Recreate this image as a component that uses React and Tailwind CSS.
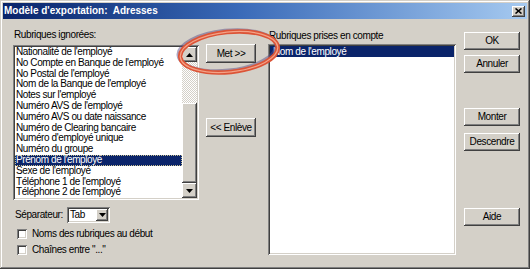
import React from "react";

const raised =
  "bg-[#d4d0c8] shadow-[inset_-1px_-1px_#404040,inset_1px_1px_#ffffff,inset_-2px_-2px_#808080,inset_2px_2px_#d4d0c8]";
const sunken =
  "shadow-[inset_1px_1px_#808080,inset_-1px_-1px_#ffffff,inset_2px_2px_#404040,inset_-2px_-2px_#d4d0c8]";

function Btn({ children, className = "" }) {
  return (
    <div
      className={`${raised} flex items-center justify-center text-[10px] tracking-[-0.4px] leading-none text-black ${className}`}
    >
      {children}
    </div>
  );
}

function DownArrow() {
  return (
    <svg width="7" height="4" viewBox="0 0 7 4">
      <path d="M0 0h7L3.5 4z" fill="#000" />
    </svg>
  );
}
function UpArrow() {
  return (
    <svg width="7" height="4" viewBox="0 0 7 4">
      <path d="M0 4h7L3.5 0z" fill="#000" />
    </svg>
  );
}

const items = [
  "Nationalité de l'employé",
  "No Compte en Banque de l'employé",
  "No Postal de l'employé",
  "Nom de la Banque de l'employé",
  "Notes sur l'employé",
  "Numéro AVS de l'employé",
  "Numéro AVS ou date naissance",
  "Numéro de Clearing bancaire",
  "Numéro d'employé unique",
  "Numéro du groupe",
  "Prénom de l'employé",
  "Sexe de l'employé",
  "Téléphone 1 de l'employé",
  "Téléphone 2 de l'employé",
];

export default function App() {
  return (
    <div
      className="relative w-[530px] h-[269px] bg-[#d4d0c8] p-[3px] flex flex-col overflow-hidden shadow-[inset_-1px_-1px_#404040,inset_1px_1px_#d4d0c8,inset_-2px_-2px_#808080,inset_2px_2px_#ffffff]"
      style={{ fontFamily: "'Liberation Sans', Arial, sans-serif" }}
    >
      {/* Title bar */}
      <div className="h-[16px] shrink-0 flex items-center justify-between bg-gradient-to-r from-[#0a246a] via-[#3a6ab8] via-45% to-[#a6caf0] pl-[1px] pr-[2px]">
        <span className="text-white font-bold text-[10px] leading-none">
          Modèle d'exportation:&nbsp; Adresses
        </span>
        <div className={`${raised} w-[13px] h-[11px] flex items-center justify-center`}>
          <svg width="7" height="6" viewBox="0 0 7 6">
            <path d="M0.5 0.5L6.5 5.5M6.5 0.5L0.5 5.5" stroke="#000" strokeWidth="1.6" />
          </svg>
        </div>
      </div>

      {/* Client area */}
      <div className="flex-1 flex pl-[10px] text-black text-[10px] tracking-[-0.4px]">
        {/* Left column */}
        <div className="w-[186px] flex flex-col pt-[10px]">
          <div className="h-[11px] leading-[11px] pl-[1px]">Rubriques ignorées:</div>
          <div className={`mt-[5px] h-[155px] bg-white ${sunken} p-[2px] flex`}>
            <div className="flex-1 overflow-hidden">
              {items.map((t) => {
                const sel = t === "Prénom de l'employé";
                return (
                  <div
                    key={t}
                    className={`h-[10.8px] leading-[10.8px] pl-[1px] whitespace-nowrap ${
                      sel
                        ? "bg-[#0a246a] text-white outline-1 outline-dotted outline-[#c8c090] -outline-offset-1"
                        : ""
                    }`}
                  >
                    {t}
                  </div>
                );
              })}
            </div>
            <div className="w-[15px] flex flex-col">
              <div className={`${raised} h-[15px] flex items-center justify-center`}>
                <UpArrow />
              </div>
              <div className="flex-1 bg-[repeating-conic-gradient(#ffffff_0%_25%,#d4d0c8_0%_50%)] bg-size-[2px_2px]" />
              <div className={`${raised} h-[80px]`} />
              <div className={`${raised} h-[15px] flex items-center justify-center`}>
                <DownArrow />
              </div>
            </div>
          </div>
          <div className="mt-[7px] flex items-center pl-[2px]">
            <div className="w-[52px] leading-none">Séparateur:</div>
            <div className={`w-[43px] h-[16px] bg-white ${sunken} p-[2px] flex items-center`}>
              <span className="flex-1 pl-[1px] leading-none">Tab</span>
              <div className={`${raised} w-[12px] h-[12px] flex items-center justify-center`}>
                <DownArrow />
              </div>
            </div>
          </div>
          <div className="mt-[6px] flex items-center pl-[4px] h-[10px]">
            <div className={`w-[10px] h-[10px] bg-white ${sunken}`} />
            <span className="ml-[5px] leading-none">Noms des rubriques au début</span>
          </div>
          <div className="mt-[6px] flex items-center pl-[4px] h-[10px]">
            <div className={`w-[10px] h-[10px] bg-white ${sunken}`} />
            <span className="ml-[5px] leading-none">Chaînes entre "..."</span>
          </div>
        </div>

        {/* Middle buttons */}
        <div className="ml-[7px] w-[50px] flex flex-col pt-[25px]">
          <Btn className="h-[19px]">Met &gt;&gt;</Btn>
          <Btn className="h-[19px] mt-[55px]">&lt;&lt; Enlève</Btn>
        </div>

        {/* Right list */}
        <div className="ml-[12px] w-[188px] flex flex-col pt-[11px]">
          <div className="h-[11px] leading-[11px] pl-[1px]">Rubriques prises en compte</div>
          <div className={`mt-[3px] h-[211px] bg-white ${sunken} p-[2px]`}>
            <div className="h-[11px] leading-[11px] pl-[3px] bg-[#0a246a] text-white">
              Nom de l'employé
            </div>
          </div>
        </div>

        {/* Right buttons */}
        <div className="ml-[8px] w-[56px] flex flex-col pt-[13px]">
          <Btn className="h-[18px]">OK</Btn>
          <Btn className="h-[18px] mt-[5px]">Annuler</Btn>
          <Btn className="h-[18px] mt-[35px]">Monter</Btn>
          <Btn className="h-[18px] mt-[7px]">Descendre</Btn>
          <Btn className="h-[18px] mt-[57px]">Aide</Btn>
        </div>
      </div>

      {/* Red annotation ellipse */}
      <svg
        className="absolute left-0 top-0 pointer-events-none"
        width="530"
        height="269"
        viewBox="0 0 530 269"
      >
        <g transform="rotate(-6 229 52)">
          <ellipse cx="227" cy="50" rx="49" ry="20" fill="none" stroke="#5b4d86" strokeOpacity="0.5" strokeWidth="3" />
          <ellipse cx="229" cy="52" rx="49" ry="20" fill="none" stroke="#dc5437" strokeWidth="4.5" />
          <ellipse cx="229" cy="52" rx="49" ry="20" fill="none" stroke="#f3a287" strokeWidth="1.2" />
        </g>
      </svg>
    </div>
  );
}
